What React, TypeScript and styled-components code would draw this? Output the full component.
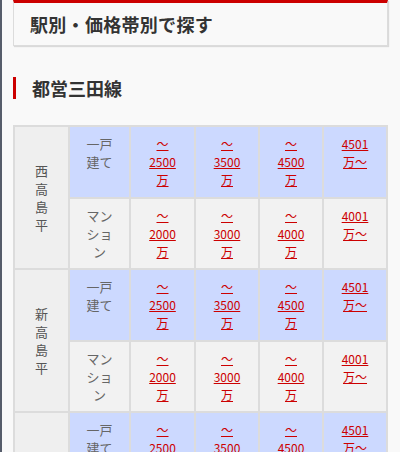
import React from 'react'
import styled, { createGlobalStyle } from 'styled-components'

const GlobalStyle = createGlobalStyle`
html {
  overflow: hidden;
}
body {
  margin: 0;
  background-color: #f9f9f9;
  font-family: "Noto Sans CJK JP", "Noto Sans", sans-serif;
  color: #333;
}
`

type Price = { label: string[] }

const houses: Price[] = [
  { label: ['～', '2500', '万'] },
  { label: ['～', '3500', '万'] },
  { label: ['～', '4500', '万'] },
  { label: ['4501', '万～'] },
]

const mansions: Price[] = [
  { label: ['～', '2000', '万'] },
  { label: ['～', '3000', '万'] },
  { label: ['～', '4000', '万'] },
  { label: ['4001', '万～'] },
]

const stations = ['西高島平', '新高島平', '高島平']

const Lines = ({ items }: { items: string[] }) => (
  <>
    {items.map((t, i) => (
      <React.Fragment key={i}>
        {t}
        {i < items.length - 1 && <br />}
      </React.Fragment>
    ))}
  </>
)

const App = () => {
  return (
    <Page>
      <GlobalStyle />
      <Container>
        <TitleBox>
          <Title>駅別・価格帯別で探す</Title>
        </TitleBox>
        <LineHeading>都営三田線</LineHeading>
        <Table>
          <colgroup>
            <col style={{ width: 55 }} />
            <col style={{ width: 61 }} />
            <col style={{ width: 65 }} />
            <col style={{ width: 64 }} />
            <col style={{ width: 64 }} />
            <col style={{ width: 64 }} />
          </colgroup>
          <tbody>
            {stations.map((s) => (
              <React.Fragment key={s}>
                <tr>
                  <Station rowSpan={2}>
                    <Lines items={s.split('')} />
                  </Station>
                  <TypeCell $house>
                    一戸<br />建て
                  </TypeCell>
                  {houses.map((p, i) => (
                    <PriceCell key={i} $house>
                      <PriceLink href="#">
                        <Lines items={p.label} />
                      </PriceLink>
                    </PriceCell>
                  ))}
                </tr>
                <tr>
                  <TypeCell $last>
                    マン<br />ショ<br />ン
                  </TypeCell>
                  {mansions.map((p, i) => (
                    <PriceCell key={i} $last>
                      <PriceLink href="#">
                        <Lines items={p.label} />
                      </PriceLink>
                    </PriceCell>
                  ))}
                </tr>
              </React.Fragment>
            ))}
          </tbody>
        </Table>
      </Container>
    </Page>
  )
}

export default App

const Page = styled.div`
min-height: 452px;
border-left: 2px solid #565d6b;
`

const Container = styled.div`
padding: 0 12px 0 11px;
`

const TitleBox = styled.div`
height: 42px;
display: flex;
align-items: center;
padding-left: 16px;
border: 1px solid #dcdcdc;
border-top: 3px solid #cc0000;
box-shadow: 1px 1px 1px rgba(0, 0, 0, 0.12);
`

const Title = styled.h2`
margin: 0;
font-size: 18px;
font-weight: 700;
color: #333;
letter-spacing: 0.3px;
`

const LineHeading = styled.h3`
margin: 31px 0 26px;
height: 22px;
display: flex;
align-items: center;
padding-left: 16px;
border-left: 3px solid #cc0000;
font-size: 18px;
font-weight: 700;
color: #333;
`

const Table = styled.table`
width: 375px;
table-layout: fixed;
border-collapse: separate;
border-spacing: 0;
border: 1px solid #dcdcdc;
font-size: 12px;
line-height: 18px;
`

const Cell = styled.td<{ $last?: boolean }>`
border: 1px solid #dcdcdc;
padding: ${(p) => (p.$last ? '8px 2px 7px' : '8px 2px')};
text-align: center;
vertical-align: top;
`

const Station = styled(Cell)`
background-color: #efefef;
color: #555;
vertical-align: middle;
font-size: 13px;
`

const TypeCell = styled(Cell)<{ $house?: boolean }>`
background-color: ${(p) => (p.$house ? '#ccd9ff' : '#f2f2f2')};
color: #666;
font-size: 13px;
`

const PriceCell = styled(Cell)<{ $house?: boolean }>`
background-color: ${(p) => (p.$house ? '#ccd9ff' : '#f2f2f2')};
`

const PriceLink = styled.a`
color: #cc0000;
text-decoration: underline;
`
